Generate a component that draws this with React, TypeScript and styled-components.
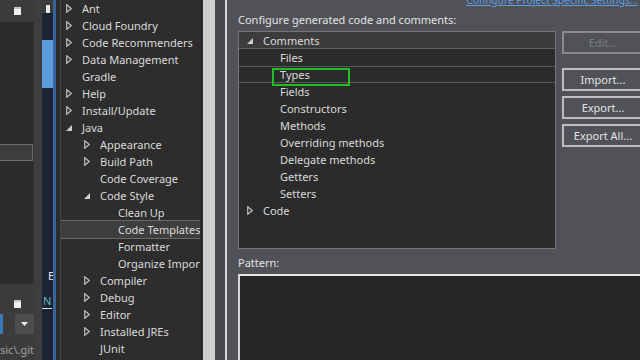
import React from "react";
import styled, { createGlobalStyle } from "styled-components";

const Global = createGlobalStyle`
  html, body { margin: 0; padding: 0; background: #2b2b2b; }
  body { font-family: "Noto Sans", "Open Sans", sans-serif; font-size: 11px; }
`;

const Root = styled.div`
  display: flex;
  width: 640px;
  height: 360px;
  overflow: hidden;
  color: #d6d6d6;
`;

/* ---------- far-left pane ---------- */
const LeftPane = styled.div`
  width: 35px;
  flex: none;
  display: flex;
  flex-direction: column;
  background: #3b3b3b;
`;
const PaneHeader = styled.div`
  height: 22px;
  display: flex;
  align-items: center;
  padding-left: 14px;
`;
const SquareIcon = styled.div`
  width: 7px;
  height: 6px;
  background: #f0f0f0;
  border-top: 2px solid #c8c8c8;
`;
const PaneBody = styled.div`
  height: 262px;
  background: #2b2b2b;
  border-bottom-right-radius: 5px;
  border-right: 1px solid #454545;
  padding-top: 122px;
  box-sizing: border-box;
`;
const StubRow = styled.div`
  height: 17px;
  width: 33px;
  box-sizing: border-box;
  background: #3d3d3d;
  border: 1px solid #6e6e6e;
  border-left: none;
`;
const PaneFooter = styled.div`
  flex: 1;
  display: flex;
  flex-direction: column;
  padding-top: 11px;
`;
const FooterIconRow = styled.div`
  height: 18px;
  display: flex;
  align-items: center;
  padding-left: 14px;
`;
const FooterControls = styled.div`
  margin-top: 1px;
  height: 20px;
  display: flex;
  align-items: stretch;
  gap: 12px;
`;
const BlueEdge = styled.div`
  width: 3px;
  background: #3a78b8;
`;
const DropButton = styled.div`
  width: 19px;
  background: #4d4d4d;
  display: flex;
  align-items: center;
  justify-content: center;
`;
const PathText = styled.div`
  margin-top: 8px;
  line-height: 15px;
  color: #a0a0a0;
  white-space: nowrap;
  font-size: 11px;
`;

const Gutter = styled.div`
  width: 7px;
  flex: none;
  background: #3e3e3e;
`;

/* ---------- blue side strip ---------- */
const SideStrip = styled.div`
  width: 18px;
  flex: none;
  display: flex;
  background: #2b2b2b;
`;
const SideMain = styled.div`
  width: 11px;
  display: flex;
  flex-direction: column;
  background: #1c2334;
`;
const SideTop = styled.div`
  height: 13px;
  background: #3b3b3b;
  display: flex;
  align-items: flex-end;
  justify-content: center;
`;
const SideTopIcon = styled.div`
  width: 4px;
  height: 8px;
  background: #e8e8e8;
`;
const SideGap = styled.div<{ $h: number }>`
  height: ${(p) => p.$h}px;
`;
const SideBlue = styled.div`
  height: 48px;
  background: #5e9ddd;
`;
const SideLetter = styled.div<{ $teal?: boolean }>`
  font-size: 11px;
  line-height: 14px;
  padding-left: ${(p) => (p.$teal ? 1 : 6)}px;
  color: ${(p) => (p.$teal ? "#5fb8c0" : "#e8e8e8")};
  overflow: hidden;
  white-space: nowrap;
  border-bottom: ${(p) => (p.$teal ? "1px solid #e0e0e0" : "none")};
  width: ${(p) => (p.$teal ? "9px" : "auto")};
`;
const SideLine = styled.div`
  width: 3px;
  background: #38659a;
`;
const SideDark = styled.div`
  width: 4px;
`;

/* ---------- preference tree ---------- */
const TreePane = styled.div`
  width: 140px;
  flex: none;
  background: #2d2d2d;
  border-left: 1px solid #454545;
  box-sizing: border-box;
  overflow: hidden;
`;
const TreeRow = styled.div<{ $indent: number; $start: number; $selected?: boolean }>`
  display: flex;
  align-items: center;
  white-space: nowrap;
  padding-left: ${(p) => p.$start + p.$indent}px;
  box-sizing: border-box;
  width: 180px;
  background: ${(p) => (p.$selected ? "#3e3e3e" : "transparent")};
  border-top: 1px solid ${(p) => (p.$selected ? "#6a6a6a" : "transparent")};
  border-bottom: 1px solid ${(p) => (p.$selected ? "#6a6a6a" : "transparent")};
  margin-top: ${(p) => (p.$selected ? -1 : 0)}px;
  margin-bottom: ${(p) => (p.$selected ? -1 : 0)}px;
  height: ${(p) => (p.$selected ? 19 : 17)}px;
`;
const Twisty = styled.span`
  width: 18px;
  flex: none;
  display: flex;
  align-items: center;
  padding-left: 2px;
  box-sizing: border-box;
`;
const Label = styled.span`
  color: #dadada;
`;

/* ---------- splitter ---------- */
const Splitter = styled.div`
  width: 27px;
  flex: none;
  display: flex;
`;
const SplitPart = styled.div<{ $w: number; $c: string }>`
  width: ${(p) => p.$w}px;
  background: ${(p) => p.$c};
`;

/* ---------- right panel ---------- */
const RightPanel = styled.div`
  flex: 1;
  background: #505257;
  padding-left: 11px;
  display: flex;
  flex-direction: column;
  min-width: 0;
`;
const LinkRow = styled.div`
  height: 6px;
  display: flex;
  justify-content: flex-end;
  align-items: flex-end;
  padding-right: 2px;
`;
const Link = styled.a`
  color: #5d9fe6;
  text-decoration: underline;
  white-space: nowrap;
  font-size: 10.2px;
  line-height: 14px;
  margin-bottom: -1px;
`;
const Caption = styled.div`
  margin-top: 5px;
  height: 20px;
  line-height: 17px;
  color: #e2e2e2;
  white-space: nowrap;
`;
const UpperArea = styled.div`
  display: flex;
  gap: 6px;
`;
const TemplateTree = styled.div`
  width: 318px;
  height: 218px;
  flex: none;
  box-sizing: border-box;
  border: 1px solid #767676;
  background: #2b2b2b;
  overflow: hidden;
`;
const TplRow = styled.div<{ $indent: number; $header?: boolean; $lined?: boolean }>`
  position: relative;
  height: 17px;
  display: flex;
  align-items: center;
  box-sizing: border-box;
  padding-left: ${(p) => 6 + p.$indent}px;
  background: ${(p) => (p.$header ? "#3c3c3c" : "transparent")};
  border-top: 1px solid ${(p) => (p.$lined ? "#585858" : "transparent")};
  border-bottom: 1px solid
    ${(p) => (p.$header ? "#626262" : p.$lined ? "#585858" : "transparent")};
`;
const Highlight = styled.div`
  position: absolute;
  left: 33px;
  top: 1px;
  width: 78px;
  height: 18px;
  box-sizing: border-box;
  border: 2px solid #20c020;
`;
const ButtonColumn = styled.div`
  display: flex;
  flex-direction: column;
  gap: 5px;
`;
const Button = styled.div<{ $disabled?: boolean; $gapBefore?: number }>`
  width: 82px;
  height: 23px;
  box-sizing: border-box;
  border: 2px solid ${(p) => (p.$disabled ? "#8a8a8a" : "#bdbdbd")};
  display: flex;
  align-items: center;
  justify-content: center;
  color: ${(p) => (p.$disabled ? "#7c7e82" : "#e4e4e4")};
  margin-top: ${(p) => p.$gapBefore ?? 0}px;
  white-space: nowrap;
`;
const PatternLabel = styled.div`
  height: 25px;
  line-height: 27px;
  color: #e2e2e2;
`;
const PatternBox = styled.div`
  flex: 1;
  background: #252525;
  border-top: 2px solid #e6e6e6;
  border-left: 2px solid #d6d6d6;
`;

const Collapsed = () => (
  <svg width="6" height="9" viewBox="0 0 6 9">
    <polygon points="0.7,0.7 5.3,4.5 0.7,8.3" fill="none" stroke="#bdbdbd" strokeWidth="1.2" />
  </svg>
);
const Expanded = () => (
  <svg width="6" height="6" viewBox="0 0 6 6">
    <polygon points="6,0 6,6 0,6" fill="#cfcfcf" />
  </svg>
);

type Node = { label: string; level: number; kind?: "open" | "closed"; selected?: boolean };

const prefs: Node[] = [
  { label: "Ant", level: 0, kind: "closed" },
  { label: "Cloud Foundry", level: 0, kind: "closed" },
  { label: "Code Recommenders", level: 0, kind: "closed" },
  { label: "Data Management", level: 0, kind: "closed" },
  { label: "Gradle", level: 0 },
  { label: "Help", level: 0, kind: "closed" },
  { label: "Install/Update", level: 0, kind: "closed" },
  { label: "Java", level: 0, kind: "open" },
  { label: "Appearance", level: 1, kind: "closed" },
  { label: "Build Path", level: 1, kind: "closed" },
  { label: "Code Coverage", level: 1 },
  { label: "Code Style", level: 1, kind: "open" },
  { label: "Clean Up", level: 2 },
  { label: "Code Templates", level: 2, selected: true },
  { label: "Formatter", level: 2 },
  { label: "Organize Imports", level: 2 },
  { label: "Compiler", level: 1, kind: "closed" },
  { label: "Debug", level: 1, kind: "closed" },
  { label: "Editor", level: 1, kind: "closed" },
  { label: "Installed JREs", level: 1, kind: "closed" },
  { label: "JUnit", level: 1 },
];

const templates: { label: string; level: number; kind?: "open" | "closed" }[] = [
  { label: "Comments", level: 0, kind: "open" },
  { label: "Files", level: 1 },
  { label: "Types", level: 1 },
  { label: "Fields", level: 1 },
  { label: "Constructors", level: 1 },
  { label: "Methods", level: 1 },
  { label: "Overriding methods", level: 1 },
  { label: "Delegate methods", level: 1 },
  { label: "Getters", level: 1 },
  { label: "Setters", level: 1 },
  { label: "Code", level: 0, kind: "closed" },
];

export default function App() {
  return (
    <>
      <Global />
      <Root>
        <LeftPane>
          <PaneHeader>
            <SquareIcon />
          </PaneHeader>
          <PaneBody>
            <StubRow />
          </PaneBody>
          <PaneFooter>
            <FooterIconRow>
              <SquareIcon />
            </FooterIconRow>
            <FooterControls>
              <BlueEdge />
              <DropButton>
                <svg width="7" height="4" viewBox="0 0 7 4">
                  <polygon points="0,0 7,0 3.5,4" fill="#f0f0f0" />
                </svg>
              </DropButton>
            </FooterControls>
            <PathText>sic\.git</PathText>
          </PaneFooter>
        </LeftPane>
        <Gutter />
        <SideStrip>
          <SideMain>
            <SideTop>
              <SideTopIcon />
            </SideTop>
            <SideGap $h={27} />
            <SideBlue />
            <SideGap $h={181} />
            <SideLetter>E</SideLetter>
            <SideGap $h={11} />
            <SideLetter $teal>N</SideLetter>
          </SideMain>
          <SideLine />
          <SideDark />
        </SideStrip>
        <TreePane>
          {prefs.map((n) => (
            <TreeRow key={n.label} $start={3} $indent={n.level * 18} $selected={n.selected}>
              <Twisty>{n.kind === "closed" ? <Collapsed /> : n.kind === "open" ? <Expanded /> : null}</Twisty>
              <Label>{n.label}</Label>
            </TreeRow>
          ))}
        </TreePane>
        <Splitter>
          <SplitPart $w={3} $c="#2b2b2b" />
          <SplitPart $w={12} $c="#cfcfcf" />
          <SplitPart $w={10} $c="#46484c" />
          <SplitPart $w={2} $c="#d8d8d8" />
        </Splitter>
        <RightPanel>
          <LinkRow>
            <Link>Configure Project Specific Settings...</Link>
          </LinkRow>
          <Caption>Configure generated code and comments:</Caption>
          <UpperArea>
            <TemplateTree>
              {templates.map((t) => (
                <TplRow
                  key={t.label}
                  $indent={t.level * 17}
                  $header={t.label === "Comments"}
                  $lined={t.label === "Types"}
                >
                  <Twisty>{t.kind === "closed" ? <Collapsed /> : t.kind === "open" ? <Expanded /> : null}</Twisty>
                  <Label>{t.label}</Label>
                  {t.label === "Types" && <Highlight />}
                </TplRow>
              ))}
            </TemplateTree>
            <ButtonColumn>
              <Button $disabled>Edit...</Button>
              <Button $gapBefore={9}>Import...</Button>
              <Button>Export...</Button>
              <Button>Export All...</Button>
            </ButtonColumn>
          </UpperArea>
          <PatternLabel>Pattern:</PatternLabel>
          <PatternBox />
        </RightPanel>
      </Root>
    </>
  );
}
